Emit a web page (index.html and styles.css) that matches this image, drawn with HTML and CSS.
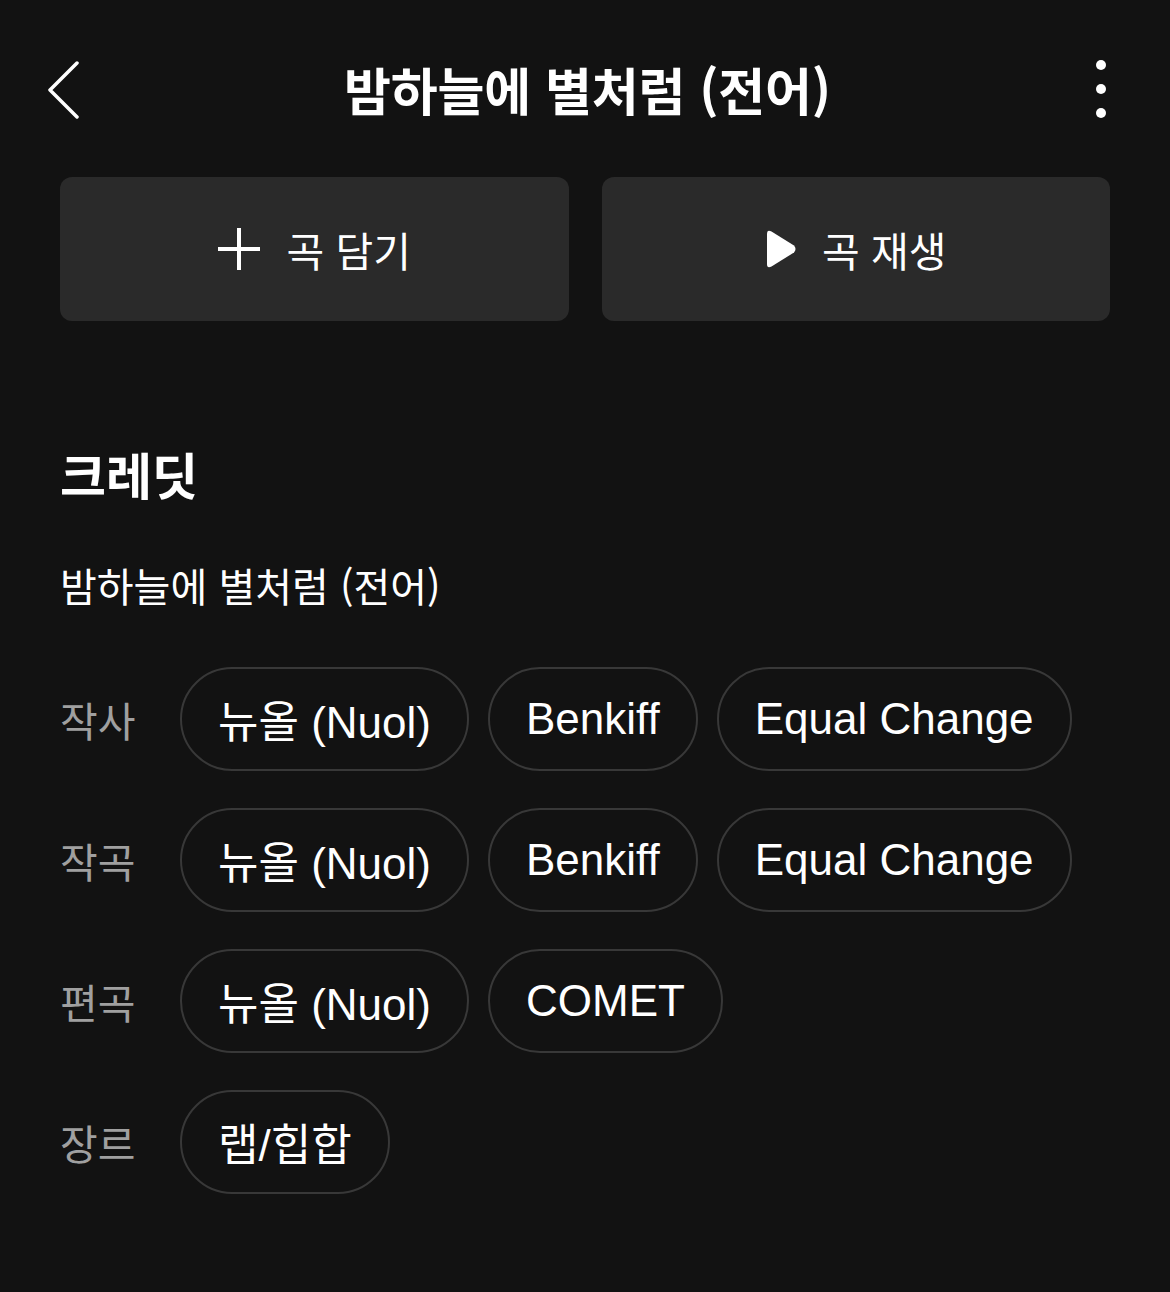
FILE: index.html
```html
<!DOCTYPE html>
<html lang="ko">
<head>
  <meta charset="UTF-8">
  <meta name="viewport" content="width=device-width, initial-scale=1.0">
  <title>크레딧</title>
  <link rel="stylesheet" href="styles.css">
</head>
<body>
  <div class="top-bar">
    <svg class="back-icon" width="40" height="60" viewBox="0 0 40 60">
      <polyline points="33,4 6,31 33,58" fill="none" stroke="#fff" stroke-width="3.5" stroke-linecap="round" stroke-linejoin="round"/>
    </svg>
    <h1 class="title">밤하늘에 별처럼 (전어)</h1>
    <svg class="more-icon" width="20" height="64" viewBox="0 0 20 64">
      <circle cx="10" cy="8" r="5" fill="#fff"/>
      <circle cx="10" cy="32" r="5" fill="#fff"/>
      <circle cx="10" cy="56" r="5" fill="#fff"/>
    </svg>
  </div>

  <div class="actions">
    <button class="action-btn">
      <svg width="44" height="44" viewBox="0 0 44 44">
        <path d="M22 1 V43 M1 22 H43" stroke="#fff" stroke-width="4"/>
      </svg>
      <span>곡 담기</span>
    </button>
    <button class="action-btn">
      <svg width="32" height="40" viewBox="0 0 32 40">
        <path d="M2 5 Q2 0 6.5 2.5 L29 16.5 Q32 20 29 23.5 L6.5 37.5 Q2 40 2 35 Z" fill="#fff"/>
      </svg>
      <span>곡 재생</span>
    </button>
  </div>

  <section class="credits">
    <h2 class="credits-title">크레딧</h2>
    <p class="song-name">밤하늘에 별처럼 (전어)</p>

    <div class="credit-row">
      <span class="credit-label">작사</span>
      <div class="chips">
        <span class="chip">뉴올 (Nuol)</span>
        <span class="chip">Benkiff</span>
        <span class="chip">Equal Change</span>
      </div>
    </div>
    <div class="credit-row">
      <span class="credit-label">작곡</span>
      <div class="chips">
        <span class="chip">뉴올 (Nuol)</span>
        <span class="chip">Benkiff</span>
        <span class="chip">Equal Change</span>
      </div>
    </div>
    <div class="credit-row">
      <span class="credit-label">편곡</span>
      <div class="chips">
        <span class="chip">뉴올 (Nuol)</span>
        <span class="chip">COMET</span>
      </div>
    </div>
    <div class="credit-row">
      <span class="credit-label">장르</span>
      <div class="chips">
        <span class="chip">랩/힙합</span>
      </div>
    </div>
  </section>
</body>
</html>
```

FILE: styles.css
```css
body {
  margin: 0;
  background-color: #121212;
  color: #fff;
  font-family: "Liberation Sans", "Noto Sans CJK KR", sans-serif;
}
.top-bar {
  height: 177px;
  display: flex;
  align-items: center;
  justify-content: space-between;
  padding: 0 60px 0 44px;
}
.title {
  margin: 0;
  font-family: "Noto Sans CJK KR", sans-serif;
  font-size: 51px;
  font-weight: 700;
  letter-spacing: -0.2px;
}
.more-icon { margin-right: -1px; }

.actions {
  display: grid;
  grid-template-columns: 1fr 1fr;
  gap: 33px;
  padding: 0 60px;
}
.action-btn {
  height: 144px;
  display: flex;
  align-items: center;
  justify-content: center;
  gap: 25px;
  background-color: #2a2a2a;
  border: none;
  border-radius: 12px;
  color: #fff;
  font-family: "Noto Sans CJK KR", sans-serif;
  font-size: 41px;
}

.credits { padding: 0 60px; }
.credits-title {
  margin: 122px 0 0;
  font-family: "Noto Sans CJK KR", sans-serif;
  font-size: 50px;
  font-weight: 700;
  line-height: 60px;
}
.song-name {
  margin: 57px 0 57px;
  font-family: "Noto Sans CJK KR", sans-serif;
  font-size: 40px;
  line-height: 50px;
}
.credit-row {
  display: flex;
  align-items: center;
  margin-bottom: 37px;
}
.credit-label {
  width: 120px;
  flex-shrink: 0;
  color: #a0a0a0;
  font-size: 41px;
  font-family: "Noto Sans CJK KR", sans-serif;
}
.chips {
  display: flex;
  gap: 19px;
}
.chip {
  height: 100px;
  display: flex;
  align-items: center;
  padding: 0 36px;
  border: 2px solid #383838;
  border-radius: 52px;
  font-size: 44px;
}
```
